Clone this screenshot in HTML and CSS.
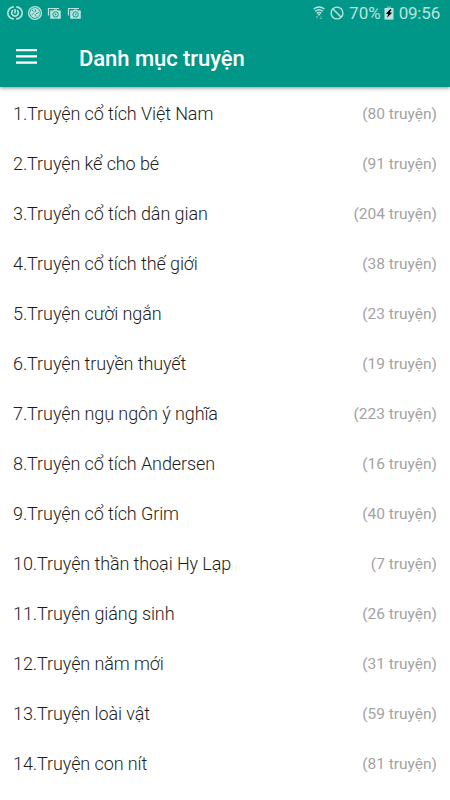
FILE: index.html
```
<!DOCTYPE html>
<html lang="vi">
<head>
    <meta charset="UTF-8">
    <meta name="viewport" content="width=device-width, initial-scale=1.0">
    <title>Danh mục truyện</title>
    <link rel="stylesheet" href="styles.css">
</head>
<body>
    <header class="top">
        <div class="status-bar">
            <div class="status-left">
                <svg width="16" height="16" viewBox="0 0 16 16" fill="none" stroke="currentColor">
                    <path d="M6.8 1.9A6 6 0 0 0 6.8 13.9M9.2 1.9A6 6 0 0 1 9.2 13.9M6 5.2a3.3 3.3 0 1 0 4 0M8 4v4.4" stroke-width="1.6"/>
                </svg>
                <svg width="16" height="16" viewBox="0 0 16 16" fill="none" stroke="currentColor">
                    <circle cx="8" cy="8" r="6.4" stroke-width="1.4"/>
                    <circle cx="8" cy="8" r="4.9" fill="currentColor" stroke="none"/>
                    <path d="M8 4l1 3M12 7.5l-3 1.2M9.5 11.5L7.7 9M4.5 10l2.4-2M5 5l2.5 1.8" stroke="#009788" stroke-width="0.8"/>
                </svg>
                <svg width="16" height="16" viewBox="0 0 16 16" fill="none" stroke="currentColor">
                    <path d="M1.5 10.5v-7h10.5" stroke-width="1.2"/>
                    <path d="M3.2 5.5h3l.8-1h3l.8 1h3v8.2H3.2z" fill="currentColor" stroke="none"/>
                    <circle cx="8.6" cy="9.4" r="2.7" stroke="#009788"/>
                    <circle cx="8.6" cy="9.4" r=".8" fill="#009788" stroke="none"/>
                </svg>
                <svg width="16" height="16" viewBox="0 0 16 16" fill="none" stroke="currentColor">
                    <path d="M1.5 10.5v-7h10.5" stroke-width="1.2"/>
                    <path d="M3.2 5.5h3l.8-1h3l.8 1h3v8.2H3.2z" fill="currentColor" stroke="none"/>
                    <circle cx="8.6" cy="9.4" r="2.7" stroke="#009788"/>
                    <circle cx="8.6" cy="9.4" r=".8" fill="#009788" stroke="none"/>
                </svg>
            </div>
            <div class="status-right">
                <svg class="wifi" width="12" height="14" viewBox="0 0 12 14" fill="none" stroke="currentColor">
                    <path d="M.6 3Q6-1.2 11.4 3M2.2 5.3Q6 2.3 9.8 5.3M3.8 7.4Q6 5.7 8.2 7.4" stroke-width="1.5"/>
                    <path d="M4.5 8.1h3L6 10z" fill="currentColor" stroke="none"/>
                    <path d="M4 10v3M2.8 11.2L4 10l1.2 1.2M8 10v3M6.8 11.8L8 13l1.2-1.2" stroke-width=".8" opacity=".5"/>
                </svg>
                <svg class="blocked" width="14" height="14" viewBox="0 0 14 14" fill="none" stroke="currentColor" stroke-width="1.4">
                    <circle cx="7" cy="7" r="5.9"/>
                    <path d="M2.8 2.8l8.4 8.4"/>
                </svg>
                <span class="percent">70%</span>
                <svg class="battery" width="10" height="14" viewBox="0 0 10 14">
                    <path d="M.5 2H9.5v11.6h-9z" fill="currentColor"/>
                    <path d="M3 .4h4V2H3z" fill="currentColor" opacity=".5"/>
                    <path d="M6.3 3L2 7.8l2.2.5L3 11.7l5-4.9-2.5-.5L7.5 4z" fill="#000"/>
                </svg>
                <span class="clock">09:56</span>
            </div>
        </div>
        <div class="toolbar">
            <svg class="menu" width="21" height="16" viewBox="0 0 21 16" fill="#fff">
                <path d="M0 0h21v2.2H0zM0 6.3h21v2.2H0zM0 12.5h21v2.2H0z"/>
            </svg>
            <h1>Danh mục truyện</h1>
        </div>
    </header>
    <ul class="list">
        <li><span>1.Truyện cổ tích Việt Nam</span><span class="count">(80 truyện)</span></li>
        <li><span>2.Truyện kể cho bé</span><span class="count">(91 truyện)</span></li>
        <li><span>3.Truyển cổ tích dân gian</span><span class="count">(204 truyện)</span></li>
        <li><span>4.Truyện cổ tích thế giới</span><span class="count">(38 truyện)</span></li>
        <li><span>5.Truyện cười ngắn</span><span class="count">(23 truyện)</span></li>
        <li><span>6.Truyện truyền thuyết</span><span class="count">(19 truyện)</span></li>
        <li><span>7.Truyện ngụ ngôn ý nghĩa</span><span class="count">(223 truyện)</span></li>
        <li><span>8.Truyện cổ tích Andersen</span><span class="count">(16 truyện)</span></li>
        <li><span>9.Truyện cổ tích Grim</span><span class="count">(40 truyện)</span></li>
        <li><span>10.Truyện thần thoại Hy Lạp</span><span class="count">(7 truyện)</span></li>
        <li><span>11.Truyện giáng sinh</span><span class="count">(26 truyện)</span></li>
        <li><span>12.Truyện năm mới</span><span class="count">(31 truyện)</span></li>
        <li><span>13.Truyện loài vật</span><span class="count">(59 truyện)</span></li>
        <li><span>14.Truyện con nít</span><span class="count">(81 truyện)</span></li>
    </ul>
</body>
</html>
```
FILE: styles.css
```
body {
    font-family: Roboto, sans-serif;
    background-color: #fff;
    margin: 0;
    padding: 0;
    height: 800px;
    overflow: hidden;
}
.top {
    height: 87px;
    background-color: #009788;
    box-shadow: 0 1px 4px rgba(0, 0, 0, 0.45);
}
.status-bar {
    display: flex;
    justify-content: space-between;
    height: 27px;
    color: #b9e3dd;
}
.status-left {
    display: flex;
    gap: 4px;
    padding: 5px 0 0 7px;
}
.status-right {
    display: flex;
    align-items: center;
    height: 26px;
    padding-right: 10px;
    font-size: 17px;
}
.wifi {
    margin-right: 1px;
}
.blocked {
    margin-left: 4px;
}
.percent {
    margin-left: 5px;
}
.battery {
    margin-left: 3px;
}
.clock {
    margin-left: 5px;
    letter-spacing: -0.2px;
}
.toolbar {
    display: flex;
    align-items: center;
    height: 60px;
    padding-left: 16px;
}
h1 {
    margin: 2px 0 0 42px;
    font-size: 22px;
    font-weight: 500;
    letter-spacing: -0.05px;
    color: #fff;
}
.list {
    list-style: none;
    margin: 0;
    padding: 1px 13px 0;
}
.list li {
    display: flex;
    justify-content: space-between;
    align-items: center;
    height: 50px;
    font-size: 18px;
    font-weight: 300;
    letter-spacing: -0.09px;
    color: #1c1c1c;
}
.list .count {
    padding-top: 2px;
    font-size: 15.5px;
    font-weight: 400;
    letter-spacing: 0;
    color: #a3a3a3;
}
```
